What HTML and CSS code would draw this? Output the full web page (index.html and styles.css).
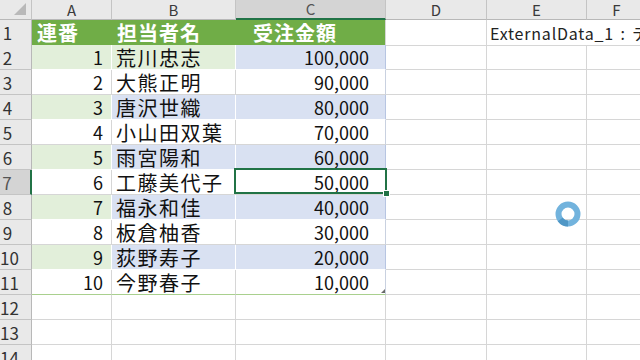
FILE: index.html
```html
<!DOCTYPE html>
<html lang="ja">
<head>
<meta charset="utf-8">
<title>Sheet</title>
<link rel="stylesheet" href="styles.css">
</head>
<body>
<div class="sheet">
  <div class="row hdr">
    <div class="corner"><svg width="31" height="19" viewBox="0 0 31 19"><polygon points="26,3 26,15 14,15" fill="#b9b9b9"/></svg></div>
    <div class="ch">A</div>
    <div class="ch">B</div>
    <div class="ch ch-sel">C</div>
    <div class="ch">D</div>
    <div class="ch">E</div>
    <div class="ch">F</div>
  </div>
  <div class="row">
    <div class="rh">1</div>
    <div class="c th">連番</div>
    <div class="c th">担当者名</div>
    <div class="c th th-amt">受注金額</div>
    <div class="c"></div>
    <div class="c ext"><span>ExternalData_1 : テーブル</span></div>
    <div class="c"></div>
  </div>
  <div class="row">
    <div class="rh">2</div>
    <div class="c num g">1</div>
    <div class="c name g">荒川忠志</div>
    <div class="c amt b">100,000</div>
    <div class="c"></div><div class="c"></div><div class="c"></div>
  </div>
  <div class="row">
    <div class="rh">3</div>
    <div class="c num">2</div>
    <div class="c name">大熊正明</div>
    <div class="c amt">90,000</div>
    <div class="c"></div><div class="c"></div><div class="c"></div>
  </div>
  <div class="row">
    <div class="rh">4</div>
    <div class="c num g">3</div>
    <div class="c name b">唐沢世織</div>
    <div class="c amt b">80,000</div>
    <div class="c"></div><div class="c"></div><div class="c"></div>
  </div>
  <div class="row">
    <div class="rh">5</div>
    <div class="c num">4</div>
    <div class="c name">小山田双葉</div>
    <div class="c amt">70,000</div>
    <div class="c"></div><div class="c"></div><div class="c"></div>
  </div>
  <div class="row">
    <div class="rh">6</div>
    <div class="c num g">5</div>
    <div class="c name b">雨宮陽和</div>
    <div class="c amt b">60,000</div>
    <div class="c"></div><div class="c"></div><div class="c"></div>
  </div>
  <div class="row">
    <div class="rh rh-sel">7</div>
    <div class="c num">6</div>
    <div class="c name">工藤美代子</div>
    <div class="c amt active">50,000<span class="fill-handle"></span></div>
    <div class="c"></div><div class="c"></div><div class="c"></div>
  </div>
  <div class="row">
    <div class="rh">8</div>
    <div class="c num g">7</div>
    <div class="c name b">福永和佳</div>
    <div class="c amt b">40,000</div>
    <div class="c"></div><div class="c"></div><div class="c"></div>
  </div>
  <div class="row">
    <div class="rh">9</div>
    <div class="c num">8</div>
    <div class="c name">板倉柚香</div>
    <div class="c amt">30,000</div>
    <div class="c"></div><div class="c"></div><div class="c"></div>
  </div>
  <div class="row">
    <div class="rh">10</div>
    <div class="c num g">9</div>
    <div class="c name b">荻野寿子</div>
    <div class="c amt b">20,000</div>
    <div class="c"></div><div class="c"></div><div class="c"></div>
  </div>
  <div class="row">
    <div class="rh">11</div>
    <div class="c num last">10</div>
    <div class="c name last">今野春子</div>
    <div class="c amt last">10,000<span class="resize"></span></div>
    <div class="c"></div><div class="c"></div><div class="c"></div>
  </div>
  <div class="row">
    <div class="rh">12</div>
    <div class="c"></div><div class="c"></div><div class="c"></div><div class="c"></div><div class="c"></div><div class="c"></div>
  </div>
  <div class="row">
    <div class="rh">13</div>
    <div class="c"></div><div class="c"></div><div class="c"></div><div class="c"></div><div class="c"></div><div class="c"></div>
  </div>
  <div class="row">
    <div class="rh">14</div>
    <div class="c"></div><div class="c"></div><div class="c"></div><div class="c"></div><div class="c"></div><div class="c"></div>
  </div>
  <svg class="spinner" width="30" height="30" viewBox="0 0 30 30">
    <circle cx="15" cy="15" r="9.5" fill="none" stroke="#72b3dd" stroke-width="6"/>
    <path d="M7.2 20.5 A9.5 9.5 0 0 0 15 24.5" fill="none" stroke="#4f97c6" stroke-width="6"/>
  </svg>
</div>
</body>
</html>
```

FILE: styles.css
```css
html, body {
  margin: 0;
  padding: 0;
  background: #ffffff;
}
body {
  width: 640px;
  height: 360px;
  overflow: hidden;
  font-family: "Noto Sans CJK JP", sans-serif;
  color: #111;
}
.sheet {
  position: relative;
  width: 640px;
  height: 360px;
  overflow: hidden;
}
.row {
  display: grid;
  grid-template-columns: 32px 80px 124px 150px 101px 100px 60px;
  height: 25px;
}
.row > div {
  box-sizing: border-box;
  border-right: 1px solid #d6d6d6;
  border-bottom: 1px solid #d6d6d6;
  white-space: nowrap;
}
.hdr {
  height: 20px;
}
.hdr > div {
  background: #e9e9e9;
  border-right: 1px solid #c4c4c4;
  border-bottom: 1px solid #b8b8b8;
  font-size: 15px;
  line-height: 19px;
  text-align: center;
  color: #3a3a3a;
}
.corner svg {
  display: block;
}
.hdr .ch-sel {
  background: #d4d4d4;
  border-bottom: 2px solid #217346;
  line-height: 18px;
  color: #555;
}
.rh {
  background: #e9e9e9;
  border-right: 1px solid #b8b8b8 !important;
  border-bottom: 1px solid #c4c4c4 !important;
  font-size: 17px;
  line-height: 23px;
  padding-top: 1px;
  padding-right: 16px;
  text-align: center;
  color: #333;
}
.rh-sel {
  background: #d4d4d4;
  border-right: 2px solid #217346 !important;
  color: #555;
}
.c {
  font-size: 18px;
  line-height: 23px;
  padding-top: 1px;
}
.th {
  background: #70ad47;
  color: #ffffff;
  font-weight: 700;
  font-size: 20px;
  letter-spacing: 1px;
  padding-left: 5px;
  border-right-color: #70ad47 !important;
  border-bottom-color: #70ad47 !important;
}
.th-amt {
  padding-left: 17px;
  border-right-color: #d6d6d6 !important;
}
.num {
  text-align: right;
  padding-right: 8px;
}
.name {
  font-size: 20px;
  letter-spacing: 1.5px;
  padding-left: 4px;
}
.amt {
  text-align: right;
  padding-right: 16px;
  position: relative;
}
.c.g {
  background: #e2efda;
  border-bottom-color: #ffffff;
  border-right-color: #ffffff;
}
.c.b {
  background: #d9e1f2;
  border-bottom-color: #ffffff;
}
.c.name.b {
  border-right-color: #ffffff;
}
.c.amt.b {
  border-right-color: #b7c5e2;
}
.c.amt {
  border-right-color: #c9d1e0;
}
.c.last {
  border-bottom: 1px solid #a9d08e;
}
.ext {
  border-right-color: transparent !important;
  overflow: visible;
  position: relative;
  z-index: 2;
}
.ext span {
  font-size: 16px;
  color: #222;
  padding-left: 3px;
  letter-spacing: 0.8px;
  word-spacing: 2px;
}
.active::after {
  content: "";
  position: absolute;
  left: -2px;
  top: -2px;
  right: -2px;
  bottom: 0px;
  border: 2px solid #217346;
  pointer-events: none;
}
.fill-handle {
  position: absolute;
  right: -5px;
  bottom: -3px;
  width: 7px;
  height: 7px;
  background: #217346;
  border: 1px solid #ffffff;
  box-sizing: border-box;
  z-index: 3;
}
.resize {
  position: absolute;
  right: 0px;
  bottom: 1px;
  width: 0;
  height: 0;
  border-left: 4px solid transparent;
  border-bottom: 4px solid #6a6a6a;
}
.spinner {
  position: absolute;
  left: 553px;
  top: 199px;
}
```
